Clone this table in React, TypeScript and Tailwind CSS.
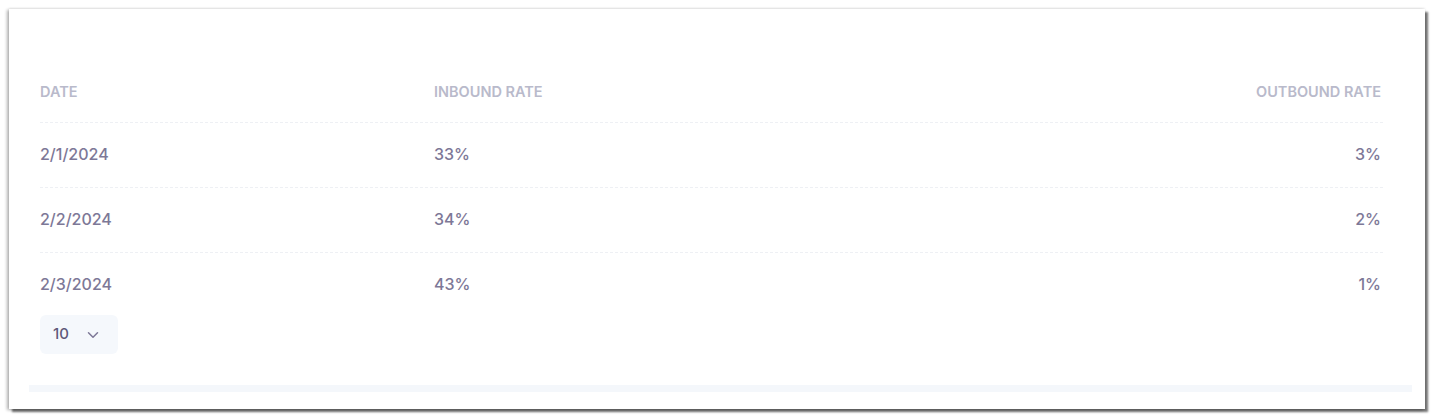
import React from "react";
import { ChevronDown } from "lucide-react";

const rows = [
  { date: "2/1/2024", inbound: "33%", outbound: "3%" },
  { date: "2/2/2024", inbound: "34%", outbound: "2%" },
  { date: "2/3/2024", inbound: "43%", outbound: "1%" },
];

const App = () => {
  return (
    <div className="w-[1442px] h-[418px] bg-white pt-[9px] pl-[9px] font-['Inter','Liberation_Sans',sans-serif]">
      <div className="w-[1416px] h-[400px] bg-white shadow-[3px_3px_2px_rgba(0,0,0,0.55),-2px_1px_3px_rgba(0,0,0,0.3),0_-1px_2px_rgba(0,0,0,0.08)] pt-[52px] pl-[31px] pr-[42px]">
        {/* table */}
        <div className="w-[1343px]">
          <div className="grid grid-cols-[394px_1fr_auto] h-[62px] items-center border-b border-dashed border-[#eef0f4] text-[14.5px] font-semibold uppercase text-[#b9bacb]">
            <div className="pt-[1px]">Date</div>
            <div className="pt-[1px]">Inbound Rate</div>
            <div className="pt-[1px] text-right pr-[2px]">Outbound Rate</div>
          </div>
          {rows.map((r, i) => (
            <div
              key={r.date}
              className={
                i < rows.length - 1
                  ? "grid grid-cols-[394px_1fr_auto] h-[65px] items-center border-b border-dashed border-[#eef0f4] text-[16px] font-medium text-[#7d7897]"
                  : "grid grid-cols-[394px_1fr_auto] h-[64px] items-center text-[16px] font-medium text-[#7d7897]"
              }
            >
              <div className="pb-[3px]">{r.date}</div>
              <div className="pb-[3px]">{r.inbound}</div>
              <div className="pb-[3px] text-right pr-[2px]">{r.outbound}</div>
            </div>
          ))}
        </div>

        {/* page size select */}
        <div className="mt-[-2px] w-[78px] h-[39px] rounded-md bg-[#f5f8fc] flex items-center pl-[13px] gap-[15px] text-[15px] font-medium text-[#5f5a7a]">
          <span>10</span>
          <ChevronDown size={18} strokeWidth={2} className="text-[#7d7897]" />
        </div>

        {/* scroll track */}
        <div className="mt-[31px] -ml-[11px] w-[1383px] h-[7px] bg-[#f4f7fb]" />
      </div>
    </div>
  );
};

export default App;
